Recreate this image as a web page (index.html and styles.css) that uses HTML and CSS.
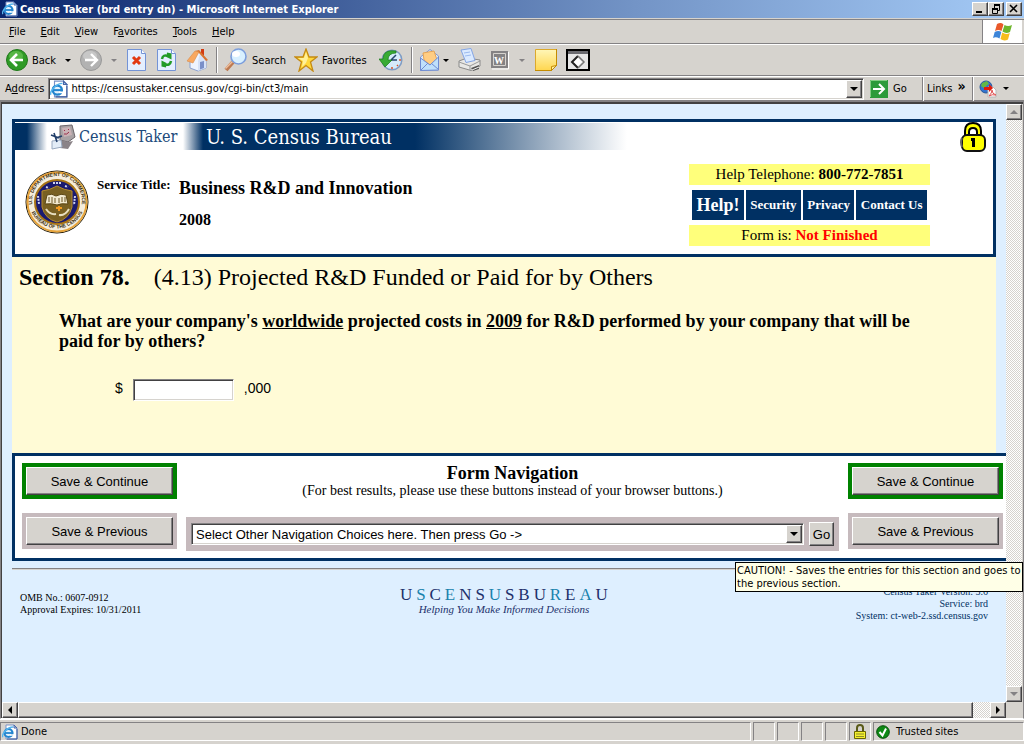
FILE: index.html
```html
<!DOCTYPE html>
<html lang="en">
<head>
    <meta charset="utf-8">
    <title>Census Taker (brd entry dn)</title>
    <link rel="stylesheet" href="styles.css">
</head>
<body>
    <!-- shared icon -->
    <svg class="defs" width="0" height="0">
        <symbol id="ie-page" viewBox="0 0 16 16">
            <path d="M4 1h8l3 3v11H4z" fill="#fff" stroke="#7a93c8"/>
            <path d="M12 1v3h3z" fill="#b9cdf0" stroke="#4766a8"/>
            <path d="M15 5v10H5" fill="none" stroke="#3c5a9c"/>
            <circle cx="6.500" cy="9" r="4" fill="#e4f3fd" stroke="#2385cf" stroke-width="2.200"/>
            <path d="M3 9h8" stroke="#2385cf" stroke-width="1.800"/>
            <path d="M8 11h4" stroke="#fff" stroke-width="1.500"/>
            <path d="M1 13C-1 11 5 3 11 3" fill="none" stroke="#55b5ed" stroke-width="1.300"/>
        </symbol>
    </svg>

    <div class="window">
        <header class="titlebar">
            <svg width="16" height="16"><use href="#ie-page"/></svg>
            <h1>Census Taker (brd entry dn) - Microsoft Internet Explorer</h1>
            <div class="window-buttons">
                <button class="raised" aria-label="Minimize"><svg width="10" height="10"><path d="M1 8h6" stroke="#000" stroke-width="2"/></svg></button>
                <button class="raised" aria-label="Restore"><svg width="10" height="10"><path d="M3 0h6v2H3zM1 4h6v2H1z"/><path d="M3.500 2v2M8.500 1v5.500H7M1.500 5v4.500h5V5" fill="none" stroke="#000"/></svg></button>
                <button class="raised close" aria-label="Close"><svg width="10" height="10"><path d="M1 1l7 7M8 1l-7 7" stroke="#000" stroke-width="1.600"/></svg></button>
            </div>
        </header>

        <nav class="menubar">
            <button><u>F</u>ile</button>
            <button><u>E</u>dit</button>
            <button><u>V</u>iew</button>
            <button>F<u>a</u>vorites</button>
            <button><u>T</u>ools</button>
            <button><u>H</u>elp</button>
            <div class="brand">
                <svg width="22" height="20" viewBox="0 0 22 20">
                    <path d="M5 2Q9 0 11.500 2.500L9.500 9Q6.500 7 3 9z" fill="#e9592a"/>
                    <path d="M12.500 3Q16 5 20 3L18 10Q14 12 10.500 9.500z" fill="#6fb62c"/>
                    <path d="M2.700 10Q6.500 8 9.300 10L7.500 16.500Q4 14.500 1 16z" fill="#3d85d8"/>
                    <path d="M10.200 10.500Q14 13 17.800 11L16 17.500Q12 19.500 8.500 17z" fill="#f6bd1c"/>
                </svg>
            </div>
        </nav>

        <div class="toolbar">
            <button>
                <svg width="22" height="22" viewBox="0 0 22 22"><circle cx="11" cy="11" r="10.500" fill="#2f9a26" stroke="#217a1b"/><ellipse cx="10" cy="7" rx="7" ry="5" fill="#72c95c" opacity=".6"/><path d="M11 5l-6 6 6 6M5.500 11H17" fill="none" stroke="#fff" stroke-width="2.600"/></svg>
                Back
            </button>
            <button aria-label="Back history"><i class="arrow"></i></button>
            <button aria-label="Forward">
                <svg width="22" height="22" viewBox="0 0 22 22"><circle cx="11" cy="11" r="10.500" fill="#b2b2b2" stroke="#999"/><ellipse cx="10" cy="7" rx="7" ry="5" fill="#d5d5d5" opacity=".6"/><path d="M11 5l6 6-6 6M16.500 11H5" fill="none" stroke="#fff" stroke-width="2.400"/></svg>
            </button>
            <button aria-label="Forward history"><i class="arrow dim"></i></button>
            <button aria-label="Stop">
                <svg width="22" height="24" viewBox="0 0 22 24"><path d="M1.500 1.500h14l4 4v17h-18z" fill="#e4efff" stroke="#7393d6"/><path d="M15.500 1.500v4h4" fill="#fff" stroke="#7393d6"/><path d="M7 9l7 7M14 9l-7 7" stroke="#e23a13" stroke-width="3"/></svg>
            </button>
            <button aria-label="Refresh">
                <svg width="22" height="24" viewBox="0 0 22 24"><path d="M1.500 1.500h14l4 4v17h-18z" fill="#e4efff" stroke="#7393d6"/><path d="M15.500 1.500v4h4" fill="#fff" stroke="#7393d6"/><path d="M6 11Q7 6 12 8" fill="none" stroke="#229b27" stroke-width="2.500"/><path d="M11 4.500l4.500 1v6l-5-2.500z" fill="#229b27"/><path d="M15 13Q14 18 9 16.500" fill="none" stroke="#229b27" stroke-width="2.500"/><path d="M10 19.500l-4.500-1v-6l5 2.500z" fill="#229b27"/></svg>
            </button>
            <button aria-label="Home">
                <svg width="22" height="24" viewBox="0 0 22 24"><path d="M15 1h3v8h-3z" fill="#d33b12"/><path d="M4 12v8l8 3 8-3v-9l-7-8z" fill="#eef4ff" stroke="#8aa0cf"/><path d="M12 13v10l8-3v-9l-6-6z" fill="#d6e2f8"/><path d="M14 14l4-1v7l-4 1.500z" fill="#7a8fc8"/><path d="M9 3l4-1 9 10-2 1-7-8z" fill="#d9742f"/><path d="M9 3l4 1-6 11-6-2z" fill="#f9a860" stroke="#d98b4a" stroke-width=".6"/></svg>
            </button>
            <span class="divider"></span>
            <button>
                <svg width="24" height="24" viewBox="0 0 24 24"><path d="M2 22l7-8" stroke="#bd7a52" stroke-width="4"/><path d="M1.500 20.500l7-7" stroke="#eebe9b" stroke-width="1.500"/><circle cx="14.500" cy="8.500" r="7.500" fill="#d8f0ff" stroke="#7c9edc" stroke-width="1.600"/><ellipse cx="12" cy="6" rx="4" ry="3" fill="#fff"/></svg>
                Search
            </button>
            <button>
                <svg width="24" height="24" viewBox="0 0 24 24"><path d="M12 1l3 8h8l-6.500 5 2.500 9-7-5.500L5 23l2.500-9L1 9h8z" fill="#ffd83b" stroke="#c58a12" stroke-width="1.300"/><path d="M12 4l2 6-2 5-4 4 1-6-5-3h6z" fill="#fff09a"/></svg>
                Favorites
            </button>
            <button class="history" aria-label="History">
                <svg width="24" height="24" viewBox="0 0 24 24"><circle cx="13" cy="12" r="9.800" fill="#d5ebfb" stroke="#7f9cc4" stroke-width="1.500"/><path d="M12 12l5-5M12 12h6" stroke="#26456f" stroke-width="1.500"/><path d="M20 12h2M13 19v2M18 17l1 1" stroke="#d9572b" stroke-width="1.500"/><path d="M17 3Q4 1 4 11H0l6 8 7-7H9Q9 5 17 5z" fill="#38ab35" stroke="#187a1a" stroke-width=".7"/></svg>
            </button>
            <span class="divider"></span>
            <button class="split" aria-label="Mail">
                <svg width="22" height="24" viewBox="0 0 22 24"><path d="M1.500 9L11 1.500 19.500 8v14l-18 .500z" fill="#d9ecff" stroke="#8297cf"/><path d="M4 5l11-2 3 9-7 5-6-5z" fill="#ffcd83" stroke="#e6a455"/><path d="M1.500 10l9.500 7 8.500-8v13l-18 .500z" fill="#bfe0fb" stroke="#6f8bd2"/><path d="M2 22l7-7M19.500 21.500l-7-6" stroke="#6f8bd2"/></svg>
                <i class="arrow"></i>
            </button>
            <button aria-label="Print">
                <svg width="24" height="24" viewBox="0 0 24 24"><path d="M1 13l8-3 13 2v6l-9 4.500L1 19z" fill="#e8e8e6" stroke="#8a8a8a"/><path d="M3 2l10-1.500 4 12-9 2z" fill="#dbeaff" stroke="#83a5e5"/><path d="M6 5l6-1M7 8l6-1" stroke="#9abaf0"/><path d="M1 14l11 4 10-5M12 18v4" fill="none" stroke="#999"/><path d="M13 20l8-3v4l-6 2z" fill="#555"/><path d="M14 22l7-3" stroke="#efefef"/></svg>
            </button>
            <button aria-label="Edit">
                <svg width="20" height="20" viewBox="0 0 20 20"><path d="M1 1h17v17H1z" fill="#848284"/><path d="M18.500 2v17H2" fill="none" stroke="#fff"/><path d="M3.500 3.500h12v12h-12z" fill="none" stroke="#d6d3ce"/><text class="edit-letter" x="4" y="14">W</text></svg>
            </button>
            <button aria-label="Edit choices"><i class="arrow dim"></i></button>
            <button aria-label="Discuss">
                <svg width="24" height="24" viewBox="0 0 24 24"><defs><linearGradient id="note" x2="0" y2="1"><stop stop-color="#fff6b8"/><stop offset="1" stop-color="#ffd64f"/></linearGradient></defs><path d="M1.500 1.500h21v16l-5 5h-16z" fill="url(#note)" stroke="#dca92c"/><path d="M1 22.500h17M22.500 1v17" stroke="#c48b00"/><path d="M17.500 22.500v-4l5-1z" fill="#fff0a0" stroke="#c48b00"/></svg>
            </button>
            <button aria-label="Research">
                <svg width="24" height="24" viewBox="0 0 24 24"><path d="M1 2h22v20H1z" fill="#e6e6e6" stroke="#000" stroke-width="2"/><path d="M2 3h20v3H2z" fill="#6b6b70"/><path d="M12 8l-6 6 6 6" fill="none" stroke="#222" stroke-width="2"/><path d="M12 8l6 6-6 6" fill="none" stroke="#777" stroke-width="1.500"/><path d="M12 10l4 4-4 4-4-4z" fill="#fff"/></svg>
            </button>
        </div>

        <div class="addressbar">
            <label for="address">A<u>d</u>dress</label>
            <div class="combo sunken">
                <svg width="18" height="18"><use href="#ie-page"/></svg>
                <input type="text" id="address" value="https://censustaker.census.gov/cgi-bin/ct3/main">
                <button class="raised drop" aria-label="Address list"><i class="arrow"></i></button>
            </div>
            <button class="go">
                <svg width="18" height="18" viewBox="0 0 18 18"><path d="M0 0h18v18H0z" fill="#2c9b3a"/><path d="M.500 17V.500H17" fill="none" stroke="#83cc83"/><path d="M3 9h11M9 4l5 5-5 5" fill="none" stroke="#fff" stroke-width="2"/></svg>
                Go
            </button>
            <div class="links">Links <b>»</b></div>
            <button class="convert" aria-label="Convert to PDF">
                <svg width="18" height="18" viewBox="0 0 18 18"><circle cx="7" cy="7" r="6" fill="#3274cf" stroke="#285797"/><path d="M3 3l5-2 2 3-3 2-1 3-4-3z" fill="#63b845"/><path d="M9 7h5l3 3v7H9z" fill="#fff" stroke="#b7b7b7"/><path d="M5 7h5V4l4 4-4 4V10H5z" fill="#e01b0b"/><path d="M10 16q3-3 3-6 0 4 4 5-4-1-7 1" fill="none" stroke="#e05252"/></svg>
                <i class="arrow"></i>
            </button>
        </div>

        <div class="pane">
            <main class="page">
                <section class="masthead">
                    <div class="banner">
                        <svg width="26" height="26" viewBox="0 0 26 26">
                            <path d="M10 2l12-1 3 12-7 5-8-2z" fill="#a8a2a4" stroke="#6c666a"/>
                            <path d="M12 4l8-1 2 8-8 2z" fill="#cab2b5"/>
                            <path d="M14 6l1 1M18 5l1 1M14 10q3 1 5-2" fill="none" stroke="#9a304b"/>
                            <path d="M10 16l8 2 5-1-5 8-8-1z" fill="#8a8387"/>
                            <path d="M2 17l9-1 1 7-10 2z" fill="#e3edf7" stroke="#9aaac0"/>
                            <path d="M4 9l3 9M1 11l8 3M6 14l6-2" stroke="#223f6a" stroke-width="1.600"/>
                        </svg>
                        <span class="taker">Census Taker</span>
                        <span class="bureau">U. S. Census Bureau</span>
                        <svg class="lock" width="26" height="30" viewBox="0 0 26 30">
                            <path d="M5 15V9q0-8 8-8t8 8v6" fill="#ff0" stroke="#000" stroke-width="2"/>
                            <path d="M9 14V10q0-4 4-4t4 4v4" fill="#fff" stroke="#000" stroke-width="2"/>
                            <rect x="2" y="13" width="23" height="16" rx="5" fill="#ff0" stroke="#111" stroke-width="2"/>
                            <path d="M2 16q-2 4 0 9" fill="none" stroke="#666" stroke-width="2"/>
                            <path d="M11 16h4v9h-3v-6h-1z"/>
                        </svg>
                    </div>
                    <div class="service">
                        <svg class="seal" width="64" height="64" viewBox="0 0 64 64">
                            <defs>
                                <path id="arc-top" d="M8 38A25 25 0 1 1 56 38"/>
                                <path id="arc-bottom" d="M7 43A28 28 0 0 0 57 43"/>
                            </defs>
                            <circle cx="32" cy="32" r="31" fill="#f5eddc" stroke="#1d1706"/>
                            <circle cx="32" cy="32" r="29.500" fill="none" stroke="#e7a43b" stroke-width="2"/>
                            <circle cx="32" cy="32" r="22" fill="#1a1a70" stroke="#a87415" stroke-width="2"/>
                            <text class="seal-text"><textPath href="#arc-top" startOffset="50%">U.S. DEPARTMENT OF COMMERCE</textPath></text>
                            <text class="seal-text"><textPath href="#arc-bottom" startOffset="50%">BUREAU OF THE CENSUS</textPath></text>
                            <path d="M17 21q8-1 15-5 7 4 15 5v16q-3 12-15 15-12-3-15-15z" fill="#796022" stroke="#b68a2c"/>
                            <path d="M22 25q5-2 9 1 5-3 10-1l2 9q-7-1-11 1-5-2-12-1z" fill="#f2e9d0" stroke="#5a4514"/>
                            <path d="M24 27v5M27 27v6M30 28v5M34 28v5M37 27v5M40 27v5" stroke="#6d5827"/>
                            <path d="M34 36v5M31 38h6" stroke="#f29a21" stroke-width="2"/>
                            <path d="M21 39q4 6 10 5M44 39q-4 7-10 6" fill="none" stroke="#e8dfc0" stroke-width="2"/>
                            <path d="M21 17l3 1M28 13h8M40 16l3 1M13 26l1 8M50 26l-1 9" stroke="#ced2ee" stroke-width="2" stroke-dasharray="2 1"/>
                        </svg>
                        <div class="service-label">Service Title:</div>
                        <div class="service-name">
                            <h2>Business R&amp;D and Innovation</h2>
                            <p>2008</p>
                        </div>
                        <div class="help">
                            <p class="strip">Help Telephone: <b>800-772-7851</b></p>
                            <div class="help-links">
                                <a class="big" href="#">Help!</a>
                                <a href="#">Security</a>
                                <a href="#">Privacy</a>
                                <a href="#">Contact Us</a>
                            </div>
                            <p class="strip">Form is: <b class="alert">Not Finished</b></p>
                        </div>
                    </div>
                </section>

                <section class="question">
                    <h2><b>Section 78.</b>(4.13) Projected R&amp;D Funded or Paid for by Others</h2>
                    <p>What are your company's <u>worldwide</u> projected costs in <u>2009</u> for R&amp;D performed by your company that will be paid for by others?</p>
                    <div class="amount">
                        <label for="amount">$</label>
                        <input class="sunken" type="text" id="amount">
                        <span>,000</span>
                    </div>
                </section>

                <section class="form-nav">
                    <div class="save">
                        <button class="primary"><span class="raised">Save &amp; Continue</span></button>
                        <button><span class="raised">Save &amp; Previous</span></button>
                    </div>
                    <div class="choices">
                        <h3 id="nav-title">Form Navigation</h3>
                        <p>(For best results, please use these buttons instead of your browser buttons.)</p>
                        <div class="choice-row">
                            <div class="combo sunken">
                                <select aria-labelledby="nav-title">
                                    <option>Select Other Navigation Choices here. Then press Go -&gt;</option>
                                </select>
                                <span class="raised drop"><i class="arrow"></i></span>
                            </div>
                            <button class="raised">Go</button>
                        </div>
                    </div>
                    <div class="save">
                        <button class="primary"><span class="raised">Save &amp; Continue</span></button>
                        <button aria-describedby="tip"><span class="raised">Save &amp; Previous</span></button>
                    </div>
                </section>

                <footer class="footer">
                    <div class="omb">OMB No.: 0607-0912<br>Approval Expires: 10/31/2011</div>
                    <div class="logo">
                        <div class="wordmark">
                            <span>U</span><span class="teal">S</span><span>C</span><span class="teal">E</span><span>N</span><span>S</span><span class="teal">U</span><span>S</span><span>B</span><span>U</span><span class="teal">R</span><span>E</span><span class="teal">A</span><span>U</span>
                        </div>
                        <em>Helping You Make Informed Decisions</em>
                    </div>
                    <div class="version">Census Taker Version: 5.6<br>Service: brd<br>System: ct-web-2.ssd.census.gov</div>
                </footer>
            </main>

            <div class="scroll-y">
                <button class="raised" aria-label="Scroll up"><i class="arrow up dim"></i></button>
                <button class="raised" aria-label="Scroll down"><i class="arrow dim"></i></button>
            </div>
            <div class="scroll-x">
                <button class="raised" aria-label="Scroll left"><i class="arrow left"></i></button>
                <span class="thumb raised"></span>
                <button class="raised" aria-label="Scroll right"><i class="arrow right"></i></button>
            </div>
            <div class="tooltip" id="tip" role="tooltip">CAUTION! - Saves the entries for this section and goes to the previous section.</div>
        </div>

        <div class="statusbar">
            <div class="cell message"><svg width="16" height="16"><use href="#ie-page"/></svg>Done</div>
            <div class="cell"></div>
            <div class="cell"></div>
            <div class="cell"></div>
            <div class="cell"></div>
            <div class="cell">
                <svg width="14" height="16" viewBox="0 0 14 16"><path d="M4 8V4q0-3 3-3t3 3v4" fill="none" stroke="#5a5a18" stroke-width="2"/><path d="M1.500 7.500h11v7h-11z" fill="#f4f02c" stroke="#6a6600"/><path d="M3 10h8M3 12.500h8" stroke="#8d8a2a"/></svg>
            </div>
            <div class="cell zone">
                <svg width="14" height="14" viewBox="0 0 14 14"><circle cx="7" cy="7" r="6.300" fill="#0e8a14" stroke="#064d0a"/><path d="M3.500 7l3 3.500L10 3.500" fill="none" stroke="#fff" stroke-width="2"/></svg>
                Trusted sites
            </div>
        </div>
    </div>
</body>
</html>
```
FILE: styles.css
```css
* {
    box-sizing: border-box;
}

body {
    margin: 0;
    background: #d6d3ce;
    color: #000;
    font-family: "DejaVu Sans Condensed", "DejaVu Sans", sans-serif;
    font-size: 11px;
}

h1, h2, h3, p {
    margin: 0;
}

button {
    margin: 0;
    padding: 0;
    border: none;
    background: none;
    color: inherit;
    font: inherit;
}

svg {
    flex: none;
}

.defs {
    position: absolute;
}

.window {
    display: flex;
    flex-direction: column;
    height: 100vh;
}

/* classic 3d edges */
.raised {
    display: flex;
    align-items: center;
    justify-content: center;
    background: #d6d3ce;
    border: 1px solid;
    border-color: #fff #424142 #424142 #fff;
    box-shadow: inset -1px -1px #848284;
}

.sunken {
    background: #fff;
    border: 1px solid;
    border-color: #848284 #fff #fff #848284;
    box-shadow: inset 1px 1px #424142, inset -1px -1px #d6d3ce;
}

.arrow {
    display: block;
    width: 0;
    border: 4px solid transparent;
    border-top-color: #000;
    border-bottom: none;
}

.arrow.dim {
    border-top-color: #848284;
}

.arrow.up {
    border-top: none;
    border-bottom: 4px solid #848284;
}

.arrow.left,
.arrow.right {
    border: 4px solid transparent;
    border-left: none;
    border-right-color: #000;
}

.arrow.right {
    border-right: none;
    border-left: 4px solid #000;
}

.drop {
    width: 16px;
    flex: none;
}

/* title bar */
.titlebar {
    display: flex;
    align-items: center;
    gap: 2px;
    height: 18px;
    padding: 0 2px;
    background: linear-gradient(90deg, #08246b, #7394c6 62%, #a5cbf7);
    color: #fff;
}

.titlebar h1 {
    font-size: 11px;
    flex: 1;
}

.window-buttons {
    display: flex;
}

.window-buttons button {
    width: 16px;
    height: 14px;
}

.window-buttons .close {
    margin-left: 2px;
}

/* menu */
.menubar {
    display: flex;
    align-items: center;
    gap: 15px;
    height: 25px;
    margin-top: 1px;
    padding-left: 9px;
    border-top: 1px solid #848284;
    border-bottom: 1px solid #848284;
}

.brand {
    display: flex;
    align-items: center;
    justify-content: center;
    align-self: stretch;
    width: 40px;
    margin-left: auto;
    margin-right: 2px;
    background: #fff;
    border-left: 1px solid #848284;
}

/* toolbar */
.toolbar {
    display: flex;
    align-items: center;
    gap: 8px;
    height: 32px;
    padding-left: 6px;
    border-top: 1px solid #fff;
    border-bottom: 1px solid #848284;
}

.toolbar button {
    display: flex;
    align-items: center;
    gap: 4px;
}

.toolbar .split {
    gap: 1px;
}

.toolbar .arrow,
.convert .arrow {
    margin: 0 1px;
    border-width: 3px 3px 0;
}

.divider {
    width: 2px;
    height: 26px;
    margin-right: -2px;
    border-left: 1px solid #848284;
    border-right: 1px solid #fff;
}

.history {
    padding-left: 4px;
}

.edit-letter {
    font: bold 10px "Liberation Serif", serif;
    fill: #fff;
}

/* address */
.addressbar {
    display: flex;
    align-items: center;
    height: 25px;
    padding: 0 2px 0 5px;
    border-top: 1px solid #fff;
    border-bottom: 1px solid #848284;
}

.combo {
    display: flex;
    flex: 1;
    height: 22px;
    padding: 1px;
}

.combo svg {
    align-self: center;
}

.combo input,
.combo select {
    flex: 1;
    min-width: 0;
    padding: 0 3px;
    border: none;
    outline: none;
    background: none;
    color: #000;
    font: inherit;
    appearance: none;
}

.addressbar .combo {
    margin-left: 4px;
}

.go,
.links,
.convert {
    display: flex;
    align-items: center;
    gap: 5px;
    height: 24px;
    padding-left: 6px;
}

.go {
    width: 58px;
}

.links,
.convert {
    width: 50px;
    border-left: 1px solid #848284;
    box-shadow: inset 1px 0 #fff;
}

.links {
    padding-left: 4px;
}

.links b {
    font-size: 14px;
    line-height: 16px;
    padding-bottom: 6px;
}

/* browser pane */
.pane {
    position: relative;
    flex: 1;
    min-height: 0;
    display: grid;
    grid-template-columns: 1fr 16px;
    grid-template-rows: 1fr 16px;
    border: 1px solid #848284;
    border-bottom-color: #fff;
    box-shadow: inset 1px 2px #424142;
    padding: 2px 1px 0 1px;
}

.page {
    overflow: hidden;
    min-width: 0;
    padding: 15px 0 0 10px;
    background: #deefff;
    font-family: "Liberation Serif", serif;
}

.scroll-y,
.scroll-x {
    display: flex;
    background: repeating-conic-gradient(#fff 0 25%, #d6d3ce 0 50%) 0 0 / 2px 2px;
}

.scroll-y {
    flex-direction: column;
    justify-content: space-between;
}

.scroll-y button,
.scroll-x button {
    width: 16px;
    height: 16px;
}

.thumb {
    flex: 1;
    margin-right: 17px;
}

/* header box */
.masthead {
    margin-right: 10px;
    background: #fff;
    border: 3px solid #003063;
}

.banner {
    position: relative;
    display: flex;
    align-items: center;
    height: 28px;
    padding-left: 35px;
    border-top: 1px solid #fff;
    background: linear-gradient(90deg, #003063 12px, #fff 32px, #fff 168px, #003063 188px, #003063 400px, #fff 612px);
    font-family: "DejaVu Serif Condensed", "DejaVu Serif", serif;
}

.taker {
    width: 130px;
    padding-left: 3px;
    color: #214a7b;
    font-size: 16px;
}

.bureau {
    color: #fff;
    font-size: 20px;
}

.lock {
    position: absolute;
    top: -1px;
    right: 7px;
}

.service {
    display: flex;
    height: 104px;
    padding-left: 10px;
}

.seal {
    margin-top: 20px;
}

.seal-text {
    font: bold 5px "Liberation Sans", sans-serif;
    text-anchor: middle;
    fill: #3a2e10;
}

.service-label {
    width: 82px;
    padding: 27px 0 0 8px;
    font-size: 13px;
    font-weight: bold;
    line-height: 16px;
    white-space: nowrap;
}

.service-name {
    flex: 1;
    padding-top: 28px;
    padding-left: 8px;
    font-size: 18px;
    font-weight: bold;
    line-height: 20px;
}

.service-name h2 {
    font-size: inherit;
}

.service-name p {
    margin-top: 12px;
    font-size: 16px;
}

.help {
    width: 241px;
    margin: 14px 63px 0 0;
}

.strip {
    height: 21px;
    background: #ffff7b;
    font-size: 15px;
    line-height: 21px;
    text-align: center;
}

.alert {
    color: #f00;
}

.help-links {
    display: flex;
    gap: 2px;
    height: 30px;
    margin: 5px 3px;
}

.help-links a {
    flex: 1 0 auto;
    padding: 0 4px;
    background: #003063;
    color: #fff;
    font-size: 13px;
    font-weight: bold;
    line-height: 30px;
    text-align: center;
    text-decoration: none;
}

.help-links .big {
    font-size: 18px;
}

/* question */
.question {
    height: 196px;
    margin-right: 10px;
    padding: 6px 7px;
    background: #fffbd6;
}

.question h2 {
    font-size: 24px;
    font-weight: normal;
    line-height: 28px;
}

.question h2 b {
    margin-right: 24px;
}

.question p {
    margin: 20px 60px 0 40px;
    font-size: 18px;
    font-weight: bold;
    line-height: 20px;
}

.amount {
    display: flex;
    align-items: center;
    margin: 28px 0 0 96px;
    font-family: "Liberation Sans", sans-serif;
    font-size: 14px;
}

.amount label,
.amount span {
    padding-bottom: 4px;
}

.amount input {
    width: 101px;
    height: 22px;
    margin: 0 10px;
    padding: 2px 4px;
    font: inherit;
}

/* navigation box */
.form-nav {
    display: flex;
    align-items: flex-start;
    gap: 9px;
    padding: 7px 3px 7px 7px;
    background: #fff;
    border: 3px solid #003063;
    border-right: none;
}

.save {
    display: flex;
    flex-direction: column;
    gap: 14px;
    width: 155px;
}

.save button {
    display: flex;
    height: 36px;
    padding: 4px;
    background: #c6babd;
    font-family: "Liberation Sans", sans-serif;
    font-size: 13px;
}

.save .primary {
    background: #008200;
}

.save button span {
    flex: 1;
    align-self: stretch;
}

.choices {
    flex: 1;
    text-align: center;
}

.choices h3 {
    font-size: 18px;
    line-height: 20px;
}

.choices p {
    font-size: 14px;
    line-height: 16px;
}

.choice-row {
    display: flex;
    align-items: center;
    gap: 5px;
    height: 34px;
    margin-top: 18px;
    padding: 0 5px;
    background: #c6babd;
    font-family: "Liberation Sans", sans-serif;
    font-size: 13px;
}

.choice-row > button {
    width: 25px;
    height: 24px;
}

/* footer */
.footer {
    display: flex;
    justify-content: space-between;
    margin-top: 7px;
    padding: 17px 18px 0 8px;
    border-top: 1px solid #848284;
    box-shadow: inset 0 1px #d6d3ce;
    font-size: 10px;
    line-height: 12px;
}

.omb,
.version {
    flex: 1;
}

.omb {
    padding-top: 6px;
}

.version {
    color: #003063;
    text-align: right;
}

.logo {
    width: 208px;
    color: #21306b;
    text-align: center;
}

.wordmark {
    display: flex;
    justify-content: space-between;
    font-size: 17px;
    line-height: 17px;
}

.teal {
    color: #1882ad;
}

.logo em {
    font-size: 11px;
}

.tooltip {
    position: absolute;
    top: 460px;
    right: 0;
    width: 288px;
    padding: 1px;
    background: #ffffe7;
    border: 1px solid #000;
    line-height: 13px;
}

/* status bar */
.statusbar {
    display: flex;
    gap: 2px;
    height: 25px;
    padding: 2px 0;
    border-top: 1px solid #fff;
}

.cell {
    display: flex;
    align-items: center;
    justify-content: center;
    width: 22px;
    height: 19px;
    border: 1px solid;
    border-color: #848284 #fff #fff #848284;
}

.message {
    flex: 1;
    justify-content: flex-start;
    gap: 3px;
    padding-left: 1px;
}

.zone {
    justify-content: flex-start;
    gap: 6px;
    width: 151px;
    padding-left: 2px;
}
```
